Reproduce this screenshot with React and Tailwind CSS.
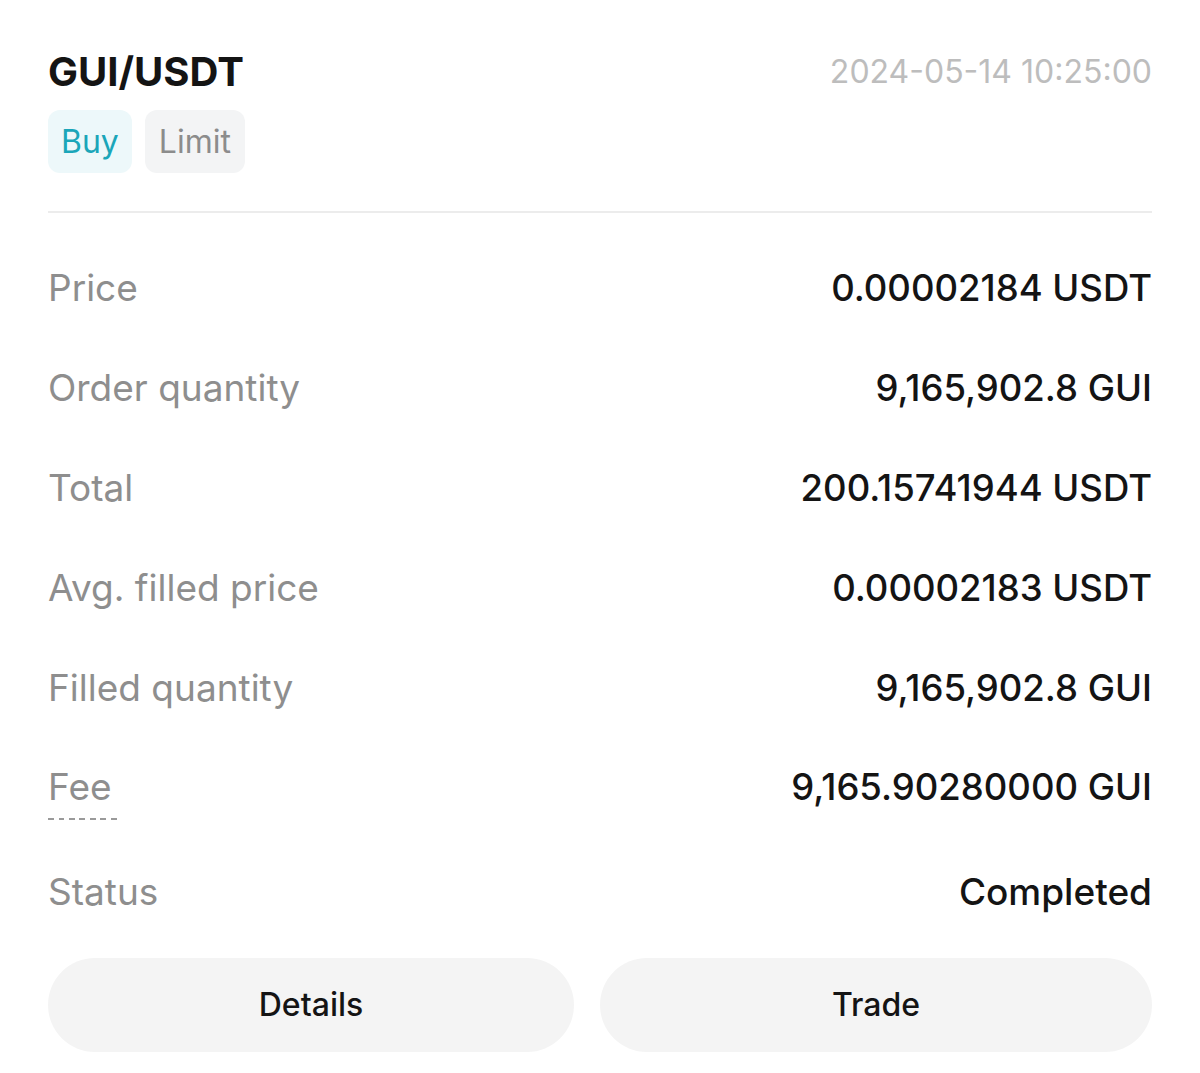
import React from 'react';

const rows = [
  { label: 'Price', value: '0.00002184 USDT' },
  { label: 'Order quantity', value: '9,165,902.8 GUI' },
  { label: 'Total', value: '200.15741944 USDT' },
  { label: 'Avg. filled price', value: '0.00002183 USDT' },
  { label: 'Filled quantity', value: '9,165,902.8 GUI' },
];

const font = { fontFamily: 'Inter, "Noto Sans", sans-serif' };

export default function App() {
  return (
    <div className="min-h-[1073px] bg-white px-12 pt-[49px] text-[#141414]" style={font}>
      {/* Encabezado */}
      <div className="flex items-center justify-between h-[46px]">
        <h1 className="text-[40px] font-bold leading-none">GUI/USDT</h1>
        <span className="text-[32px] text-[#bdbdbd] leading-none">2024-05-14 10:25:00</span>
      </div>

      <div className="mt-[15px] flex gap-[13px]">
        <span className="h-[63px] px-[13px] flex items-center rounded-[12px] bg-[#edf8fa] text-[#1ba6b9] text-[32px]">
          Buy
        </span>
        <span className="h-[63px] px-[14px] flex items-center rounded-[12px] bg-[#f3f4f5] text-[#8c8c8c] text-[32px]">
          Limit
        </span>
      </div>

      <div className="mt-[38px] h-[2px] bg-[#ececec]" />

      {/* Detalles */}
      <div className="mt-[25px]">
        {rows.map((r) => (
          <div key={r.label} className="flex items-center justify-between h-[100px]">
            <span className="text-[37px] text-[#8e8e8e] leading-[44px]">{r.label}</span>
            <span className="text-[36.5px] font-medium leading-[44px]">{r.value}</span>
          </div>
        ))}

        <div className="flex items-start justify-between h-[104px] pt-[27px]">
          <div className="flex flex-col">
            <span className="text-[37px] text-[#8e8e8e] leading-[44px]">Fee</span>
            <div className="mt-[9px] w-[73px] h-[2px] bg-[repeating-linear-gradient(90deg,#9a9a9a_0_6px,transparent_6px_10.5px)]" />
          </div>
          <span className="text-[36.5px] font-medium leading-[44px]">9,165.90280000 GUI</span>
        </div>

        <div className="flex items-center justify-between h-[100px]">
          <span className="text-[37px] text-[#8e8e8e] leading-[44px]">Status</span>
          <span className="text-[37px] font-medium leading-[44px]">Completed</span>
        </div>
      </div>

      {/* Botones */}
      <div className="mt-[16px] flex gap-[26px]">
        <button className="w-[526px] h-[94px] rounded-full bg-[#f4f4f4] text-[32px] font-medium">
          Details
        </button>
        <button className="flex-1 h-[94px] rounded-full bg-[#f4f4f4] text-[32px] font-medium">
          Trade
        </button>
      </div>
    </div>
  );
}
